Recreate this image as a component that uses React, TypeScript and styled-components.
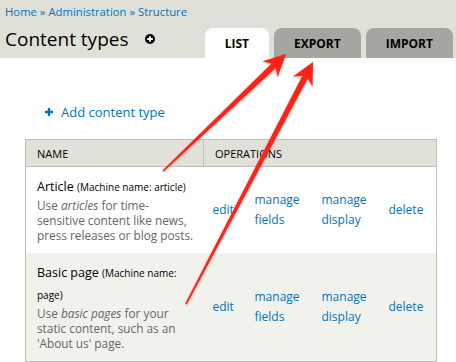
import React from 'react';
import styled, { createGlobalStyle } from 'styled-components';

const GlobalStyle = createGlobalStyle`
  html, body {
    margin: 0;
    padding: 0;
    background: #fff;
  }
  body {
    font-family: "Open Sans", "DejaVu Sans", sans-serif;
    color: #000;
  }
`;

const Page = styled.div`
  position: relative;
  width: 456px;
  height: 362px;
  overflow: hidden;
`;

const Header = styled.header`
  background: #e0e0d8;
  padding: 4px 3px 0 5px;
`;

const Breadcrumb = styled.nav`
  font-size: 11.3px;
  line-height: 16px;
  color: #0074bd;
`;

const Link = styled.a`
  color: #0074bd;
  text-decoration: none;
`;

const TitleRow = styled.div`
  display: flex;
  align-items: flex-end;
  justify-content: space-between;
  margin-top: 7px;
`;

const Title = styled.h1`
  display: flex;
  align-items: center;
  gap: 16px;
  margin: 0 0 7px;
  font-size: 19px;
  font-weight: normal;
  line-height: 24px;
`;

const Tabs = styled.ul`
  display: flex;
  gap: 5px;
  margin: 0;
  padding: 0;
  list-style: none;
`;

const Tab = styled.li<{ $active?: boolean }>`
  display: flex;
  align-items: center;
  justify-content: center;
  height: 30px;
  padding: 0 20px;
  border-radius: 8px 8px 0 0;
  background: ${(p) => (p.$active ? '#fff' : '#a6a6a0')};
  font-size: 12px;
  font-weight: bold;
`;

const Main = styled.main`
  padding: 0 20px 0 25px;
`;

const AddLink = styled(Link)`
  display: flex;
  align-items: center;
  gap: 8px;
  margin: 45px 0 0 20px;
  font-size: 13px;
  line-height: 18px;
`;

const Table = styled.table`
  width: 411px;
  margin-top: 18px;
  border-collapse: collapse;
  border: 1px solid #bebfb9;
  table-layout: fixed;
`;

const Th = styled.th`
  height: 26px;
  padding: 0 11px;
  background: #e1e1da;
  border: 1px solid #bebfb9;
  font-size: 11px;
  font-weight: normal;
  text-align: left;
`;

const Row = styled.tr<{ $even?: boolean }>`
  background: ${(p) => (p.$even ? '#f2f2ed' : '#fff')};
`;

const NameCell = styled.td`
  padding: 9px 6px 10px 11px;
  vertical-align: top;
`;

const TypeName = styled.div`
  font-size: 12.5px;
  line-height: 21px;
`;

const Machine = styled.small`
  font-size: 10px;
`;

const Desc = styled.div`
  font-size: 11.8px;
  line-height: 15px;
  color: #666;
`;

const OpCell = styled.td`
  padding: 0 6px 0 9px;
  vertical-align: middle;
  font-size: 12px;
  line-height: 20px;
`;

const Overlay = styled.svg`
  position: absolute;
  left: 0;
  top: 0;
  pointer-events: none;
`;

const arrow = (x1: number, y1: number, x2: number, y2: number) => {
  const dx = x2 - x1;
  const dy = y2 - y1;
  const len = Math.hypot(dx, dy);
  const ux = dx / len;
  const uy = dy / len;
  const nx = -uy;
  const ny = ux;
  const headLen = 22;
  const headHalf = 11;
  const tail = 0.8;
  const neck = 3;
  const bx = x2 - ux * headLen;
  const by = y2 - uy * headLen;
  const sx = x2 - ux * (headLen - 5);
  const sy = y2 - uy * (headLen - 5);
  const pts = [
    [x1 + nx * tail, y1 + ny * tail],
    [sx + nx * neck, sy + ny * neck],
    [bx + nx * headHalf, by + ny * headHalf],
    [x2, y2],
    [bx - nx * headHalf, by - ny * headHalf],
    [sx - nx * neck, sy - ny * neck],
    [x1 - nx * tail, y1 - ny * tail],
  ];
  return pts.map((p) => p.map((v) => v.toFixed(1)).join(',')).join(' ');
};

const ops = [
  ['edit'],
  ['manage', 'fields'],
  ['manage', 'display'],
  ['delete'],
];

const Ops = () => (
  <>
    {ops.map((lines) => (
      <OpCell key={lines.join()}>
        <Link href="#">
          {lines.map((l, i) => (
            <React.Fragment key={l}>
              {i > 0 && <br />}
              {l}
            </React.Fragment>
          ))}
        </Link>
      </OpCell>
    ))}
  </>
);

const App = () => (
  <Page>
    <GlobalStyle />
    <Header>
      <Breadcrumb>
        <Link href="#">Home</Link> » <Link href="#">Administration</Link> »{' '}
        <Link href="#">Structure</Link>
      </Breadcrumb>
      <TitleRow>
        <Title>
          Content types
          <svg width="10" height="10" viewBox="0 0 10 10">
            <circle cx="5" cy="5" r="5" fill="#000" />
            <path d="M5 2.2v5.6M2.2 5h5.6" stroke="#fff" strokeWidth="1.8" />
          </svg>
        </Title>
        <Tabs>
          <Tab $active>LIST</Tab>
          <Tab>EXPORT</Tab>
          <Tab>IMPORT</Tab>
        </Tabs>
      </TitleRow>
    </Header>
    <Main>
      <AddLink href="#">
        <svg width="8" height="8" viewBox="0 0 8 8">
          <path d="M4 0v8M0 4h8" stroke="#0074bd" strokeWidth="2.4" />
        </svg>
        Add content type
      </AddLink>
      <Table>
        <colgroup>
          <col style={{ width: 178 }} />
          <col style={{ width: 42 }} />
          <col style={{ width: 67 }} />
          <col style={{ width: 67 }} />
          <col style={{ width: 57 }} />
        </colgroup>
        <thead>
          <tr>
            <Th>NAME</Th>
            <Th colSpan={4}>OPERATIONS</Th>
          </tr>
        </thead>
        <tbody>
          <Row>
            <NameCell>
              <TypeName>
                Article <Machine>(Machine name: article)</Machine>
              </TypeName>
              <Desc>
                Use <em>articles</em> for time-
                <br />
                sensitive content like news,
                <br />
                press releases or blog posts.
              </Desc>
            </NameCell>
            <Ops />
          </Row>
          <Row $even>
            <NameCell>
              <TypeName>
                Basic page <Machine>(Machine name:</Machine>
                <br />
                <Machine>page)</Machine>
              </TypeName>
              <Desc>
                Use <em>basic pages</em> for your
                <br />
                static content, such as an
                <br />
                'About us' page.
              </Desc>
            </NameCell>
            <Ops />
          </Row>
        </tbody>
      </Table>
    </Main>
    <Overlay width="456" height="362" viewBox="0 0 456 362">
      <defs>
        <filter id="shadow" x="-20%" y="-20%" width="140%" height="140%">
          <feDropShadow dx="0" dy="1" stdDeviation="1" floodColor="#000" floodOpacity="0.35" />
        </filter>
      </defs>
      <g fill="#ff2216" filter="url(#shadow)">
        <polygon points={arrow(163, 171, 286, 54)} />
        <polygon points={arrow(186, 304, 313, 62)} />
      </g>
    </Overlay>
  </Page>
);

export default App;
